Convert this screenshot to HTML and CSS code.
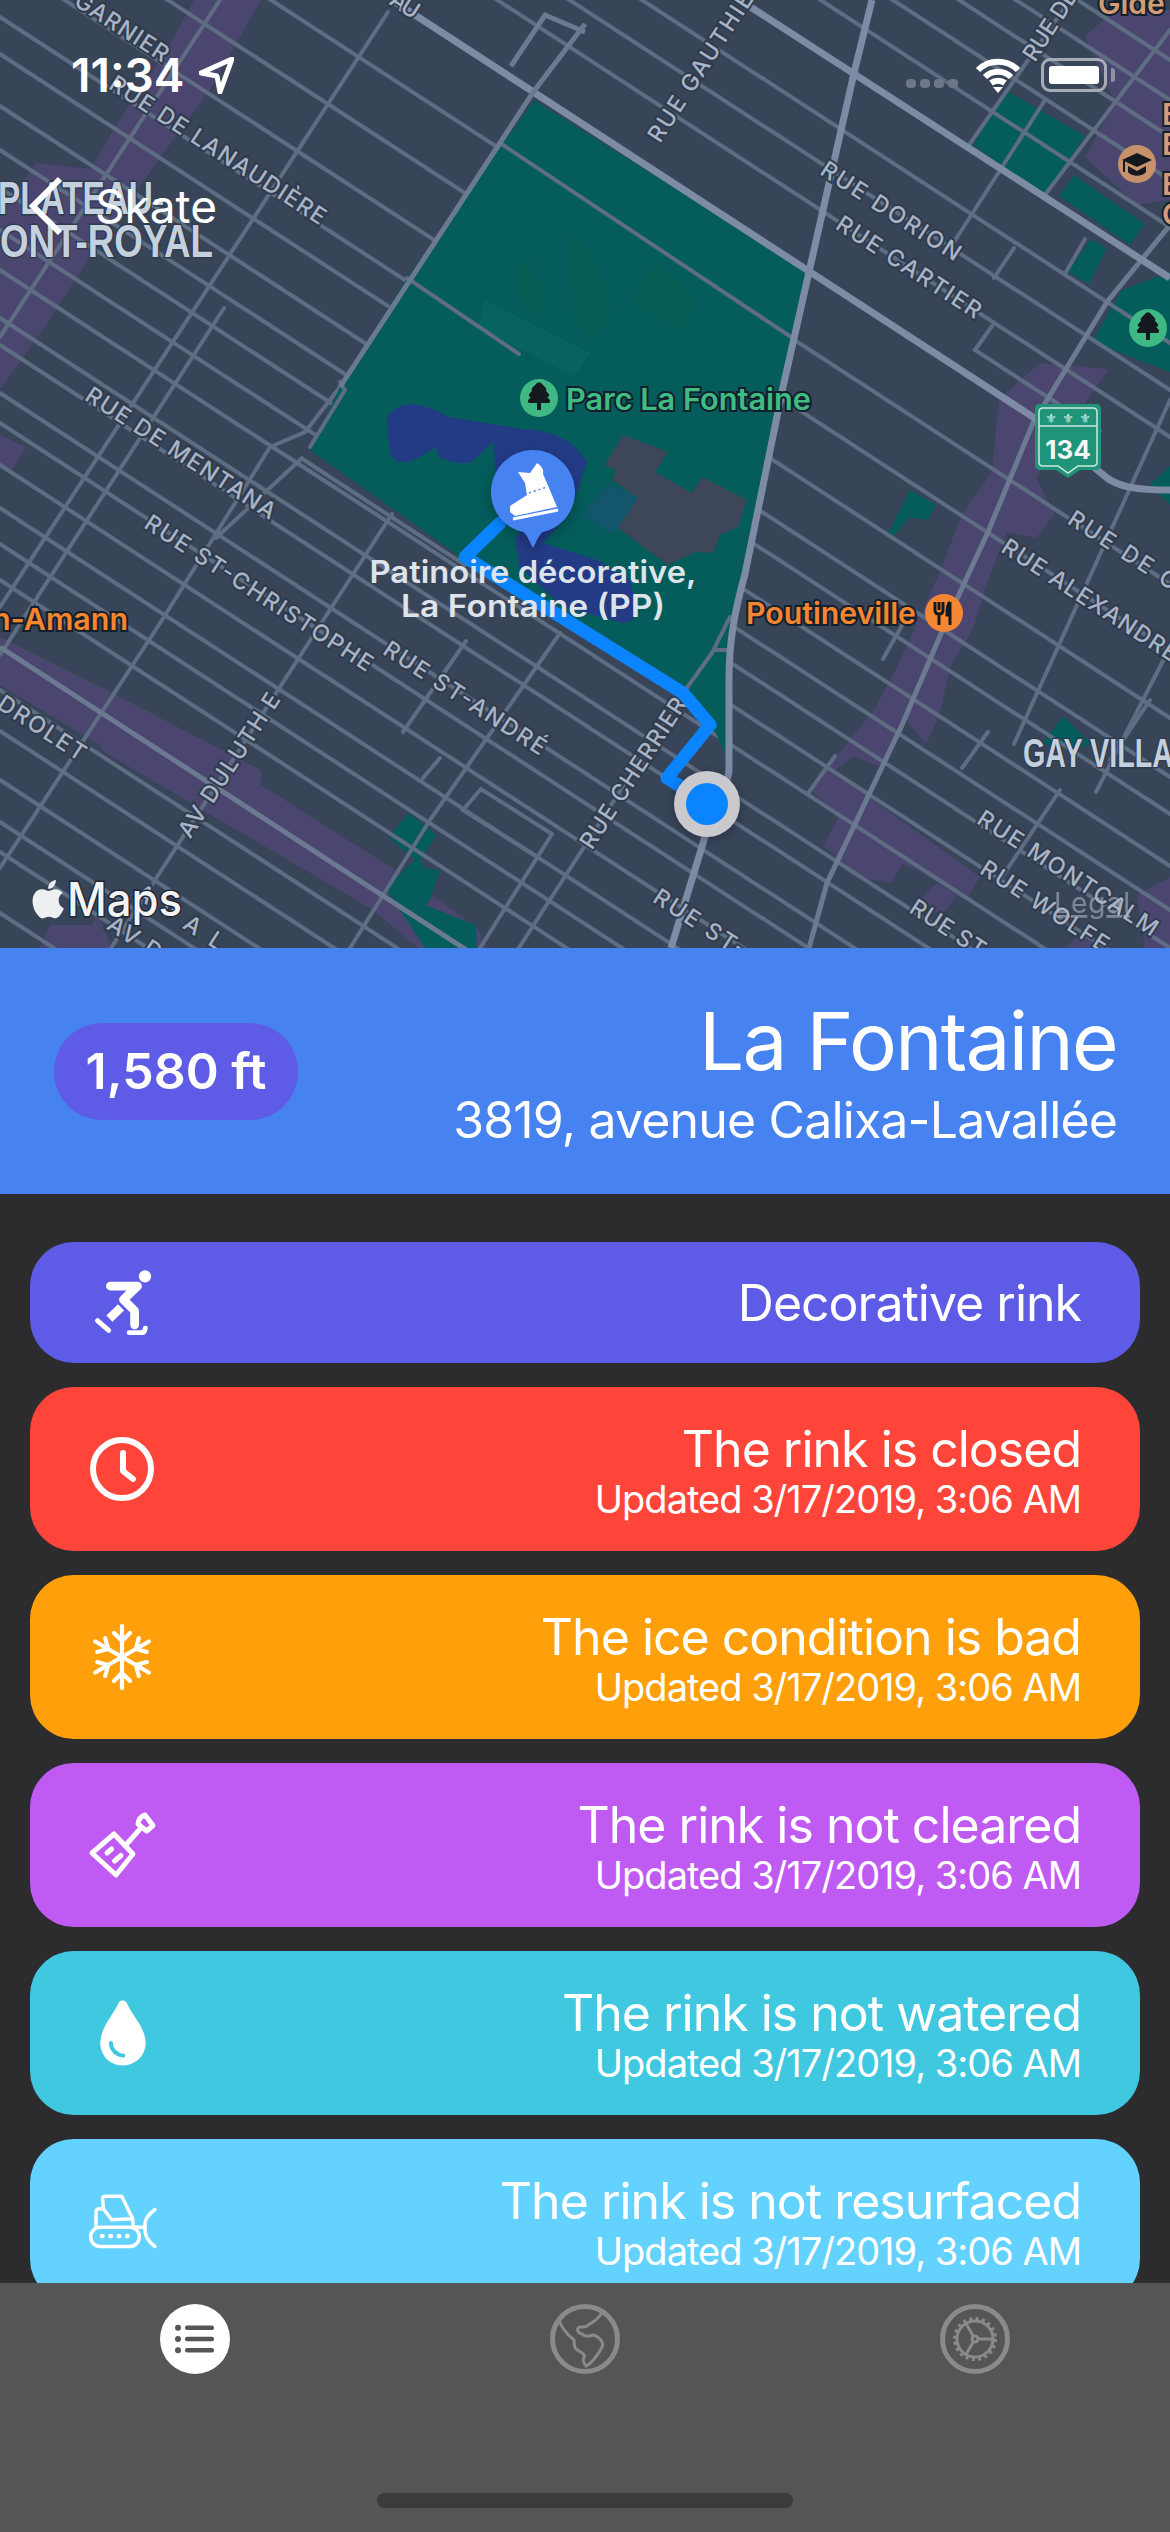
FILE: index.html
```html
<!DOCTYPE html>
<html>
  <head>
    <title>Skate</title>
    <link rel="stylesheet" href="styles.css">
  </head>
  <body>
    <div class="map">
      <svg class="map-canvas" viewBox="0 0 1170 948" width="1170" height="948">
        <!-- land use -->
        <g class="purple">
          <polygon points="194,0 261,0 209,91 112,224 45,326 0,390 0,212 37,163 90,169 123,115 168,48"/>
          <polygon points="0,435 26,447 11,471 0,468"/>
          <polygon points="0,637 112,693 261,770 261,785 395,870 477,927 487,948 418,948 373,910 104,752 100,745 0,685"/>
          <polygon points="50,925 90,925 100,948 40,948"/>
          <polygon points="82,948 97,913 112,948"/>
          <polygon points="1040,363 1109,369 1096,387 1036,478 1055,514 1036,538 1007,532 988,580 973,629 951,665 938,719 926,744 906,719 883,768 854,756 813,786 876,707 898,665 939,574 962,514 992,472 999,399"/>
          <polygon points="824,765 980,877 966,900 917,870 902,864 891,883 857,877 824,846 839,816 813,792"/>
          <polygon points="1085,36 1115,10 1170,10 1170,200 1137,205 1085,157 1115,103"/>
          <polygon points="1137,895 1170,877 1170,948 1145,948"/>
          <polygon points="913,907 936,883 958,895 943,913"/>
          <polygon points="1066,948 1081,931 1100,948"/>
        </g>
        <g class="park">
          <polygon points="973,145 1007,91 1085,136 1044,196"/>
          <polygon points="1059,196 1074,175 1145,224 1130,245"/>
          <polygon points="1068,272 1091,239 1107,248 1089,284"/>
          <polygon points="1092,342 1122,290 1170,272 1170,372"/>
          <polygon points="1150,484 1170,466 1170,505"/>
          <polygon points="887,535 910,490 936,505 928,520 910,517 895,535"/>
          <polygon points="1042,744 1063,716 1092,744 1075,750"/>
          <polygon points="388,837 409,813 437,835 420,860 425,868 440,870 430,900 425,905 476,925 477,948 425,948 385,888 415,860"/>
        </g>

        <!-- streets, NW-SE then NE-SW -->
        <path class="street" d="M0 -700L1170 60M0 -660L1170 100M0 -623L1170 137M0 -580L1170 180M0 -533L1170 227M0 -417L1170 343M0 -370L1170 390M0 -323L1170 437M0 -176L1170 584M0 -109L1170 651M0 -42L1170 718M0 17L1170 777M0 54L1170 814M0 106L1170 866M0 150L1170 910M0 188L1170 948M0 230L1170 990M0 270L1170 1030M0 318L1170 1078M0 345L1170 1105M0 393L1170 1153M0 423L1170 1183M0 465L1170 1225M0 508L1170 1268M0 544L1170 1304M0 580L1170 1340M0 690L1170 1450M0 731L1170 1491M0 780L1170 1540M0 822L1170 1582M0 852L1170 1612M0 913L1170 1673"/>
        <path class="street" d="M388 12L0 607M220 0L0 337M224 308L0 655M302 458L216 538M340 387L305 432L270 447L164 617L0 868M392 514L111 948M466 641L403 732M560 633L430 820L350 948M552 834L480 948M552 834L481 789L463 810L534 855M686 689L462 1036M440 758L423 778"/>
        <path class="street" d="M1070 0L969 145M1045 100L954 242M1014 248L994 278M1170 30L1044 196M1085 239L1066 272M992 326L975 350L1100 431M1170 400L1014 744M1170 647L1096 792M1060 790L1000 880M988 732L962 768M883 659L905 620M809 792L835 756M1150 700L1110 760"/>
        <path class="road-mid" d="M0 647L1170 1407M1170 225L1107 302L1033 423L988 532L943 629L902 725L827 883L809 948"/>

        <!-- Parc La Fontaine -->
        <polygon class="park" points="534,100 809,272 783,387 745,574 729,659 729,762 712,725 686,689 459,556 310,450 340,387 407,278"/>
        <polygon class="park-light" points="485,300 590,353 575,377 478,327"/>
        <polygon class="park-dark" points="515,270 530,257 545,300 530,320 518,300"/>
        <polygon class="park-dark" points="567,233 590,250 612,310 590,345 570,300"/>
        <polygon class="park-dark" points="630,300 655,260 698,300 680,330"/>
        <path class="water" d="M387 420C395 400 420 400 448 417L522 429C550 430 575 440 587 462L570 513L543 543L597 560L630 580C636 600 636 612 633 620L623 623L563 607L520 567L515 540L520 530L495 470L493 442L470 463L457 463L438 457L437 447L410 462L397 462L390 453Z"/>
        <polygon class="building" points="623,435 668,452 655,472 692,493 702,477 747,500 738,527 720,535 713,553 695,552 668,565 618,528 638,498 612,480 617,470 605,465"/>
        <polygon class="building-teal" points="583,515 608,483 638,498 612,535"/>
        <path class="street" d="M407 278L519 354M500 143L791 337M304 460L465 565M340 382L345 390L310 447"/>
        <path class="street" d="M686 689L712 653L730 617M715 650H729"/>

        <!-- big roads -->
        <path class="road" d="M392 0L1033 417L1107 478C1120 487 1135 490 1170 490M749 6L1170 278"/>
        <path class="road" d="M872 0L854 73L809 272L783 387L745 574C735 610 729 640 729 680V768Q729 785 712 804L704 840L671 948"/>
        <path class="road-mid" d="M585 32L545 15L511 66M585 24L534 91L340 387"/>

        <!-- street names -->
        <g class="street-names">
          <text transform="translate(122 27) rotate(33)" y="8" textLength="107">GARNIER</text>
          <text transform="translate(218 150) rotate(33)" y="8" textLength="253">RUE DE LANAUDIÈRE</text>
          <text transform="translate(181 453) rotate(33)" y="8" textLength="222">RUE DE MENTANA</text>
          <text transform="translate(259 593) rotate(33)" y="8" textLength="267">RUE ST-CHRISTOPHE</text>
          <text transform="translate(465 698) rotate(33)" y="8" textLength="189">RUE ST-ANDRÉ</text>
          <text transform="translate(42 728) rotate(33)" y="8" textLength="100">DROLET</text>
          <text transform="translate(229 765) rotate(-57)" y="8" textLength="167">AV DULUTH E</text>
          <text transform="translate(180 917) rotate(33)" y="8" textLength="100">AVAL</text>
          <text transform="translate(135 938) rotate(33)" y="8" textLength="60">AV D</text>
          <text transform="translate(405 5) rotate(33)" y="8" textLength="30">AU</text>
          <text transform="translate(705 60) rotate(-57)" y="8" textLength="190">RUE GAUTHIER</text>
          <text transform="translate(1050 25) rotate(-57)" y="8" textLength="80">RUE DE</text>
          <text transform="translate(891 211) rotate(33)" y="8" textLength="162">RUE DORION</text>
          <text transform="translate(909 267) rotate(33)" y="8" textLength="168">RUE CARTIER</text>
          <text transform="translate(1123 550) rotate(33)" y="8" textLength="125">RUE DE C</text>
          <text transform="translate(1090 600) rotate(33)" y="8" textLength="205">RUE ALEXANDRE</text>
          <text transform="translate(1068 873) rotate(33)" y="8" textLength="210">RUE MONTCALM</text>
          <text transform="translate(1045 906) rotate(33)" y="8" textLength="148">RUE WOLFE</text>
          <text transform="translate(948 928) rotate(33)" y="8" textLength="85">RUE ST</text>
          <text transform="translate(700 923) rotate(33)" y="8" textLength="105">RUE ST-</text>
          <text transform="translate(633 773) rotate(-57)" y="8" textLength="175">RUE CHERRIER</text>
        </g>
        <text class="district" x="-2" y="214" textLength="166" lengthAdjust="spacingAndGlyphs">PLATEAU-</text>
        <text class="district" x="0" y="257" textLength="213" lengthAdjust="spacingAndGlyphs">ONT-ROYAL</text>
        <text class="district district-small" x="1023" y="767" textLength="150" lengthAdjust="spacingAndGlyphs">GAY VILLA</text>

        <!-- places -->
        <circle class="poi-green" cx="539" cy="398" r="19"/>
        <path class="poi-glyph" d="M537 403H530C528 403 527 401 529 399L531 397C529 397 528 395 530 393L532 391C531 390 532 388 533 387L537 383C538 382 540 382 541 383L545 387C546 388 547 390 546 391L548 393C550 395 549 397 547 397L549 399C551 401 550 403 548 403H541V410H537Z"/>
        <text class="poi-text poi-text-green" x="566" y="410" textLength="245" lengthAdjust="spacingAndGlyphs">Parc La Fontaine</text>
        <circle class="poi-green" cx="1148" cy="328" r="19"/>
        <path class="poi-glyph" d="M1146 333H1139C1137 333 1136 331 1138 329L1140 327C1138 327 1137 325 1139 323L1141 321C1140 320 1141 318 1142 317L1146 313C1147 312 1149 312 1150 313L1154 317C1155 318 1156 320 1155 321L1157 323C1159 325 1158 327 1156 327L1158 329C1160 331 1159 333 1157 333H1150V340H1146Z"/>
        <circle class="poi-orange" cx="944" cy="613" r="19"/>
        <path class="poi-glyph-line" d="M935 602V610C935 613 937 614 939 614V625M943 602V610C943 613 941 614 939 614M939 602V610M950 602C947 604 947 610 947 615H950M950 602V625"/>
        <text class="poi-text poi-text-orange" x="746" y="624" textLength="170" lengthAdjust="spacingAndGlyphs">Poutineville</text>
        <text class="poi-text poi-text-orange" x="-8" y="630" textLength="136" lengthAdjust="spacingAndGlyphs">n-Amann</text>
        <circle class="poi-brown" cx="1137" cy="164" r="19"/>
        <path class="poi-glyph" d="M1137 153L1152 160L1137 167L1122 160ZM1128 166L1137 171L1146 166V172C1142 177 1132 177 1128 172ZM1123 161H1125V172H1123Z"/>
        <text class="poi-text poi-text-brown" x="1098" y="14">Gide</text>
        <text class="poi-text poi-text-brown" x="1162" y="125">E</text>
        <text class="poi-text poi-text-brown" x="1162" y="155">E</text>
        <text class="poi-text poi-text-brown" x="1162" y="195">E</text>
        <text class="poi-text poi-text-brown" x="1162" y="225">C</text>

        <!-- highway shield -->
        <path class="shield" d="M1040 404H1096Q1101 404 1101 409V464Q1101 470 1096 470H1080L1068 478L1056 470H1040Q1035 470 1035 464V409Q1035 404 1040 404Z"/>
        <path class="shield-line" d="M1043 408H1093Q1097 408 1097 412V462Q1097 466 1093 466H1078L1068 473L1058 466H1043Q1039 466 1039 462V412Q1039 408 1043 408ZM1039 426H1097"/>
        <text class="shield-fleur" x="1051" y="423">⚜</text>
        <text class="shield-fleur" x="1068" y="423">⚜</text>
        <text class="shield-fleur" x="1085" y="423">⚜</text>
        <text class="shield-num" x="1068" y="459">134</text>

        <!-- route, pin and position -->
        <path class="route" d="M500 523L465 557L683 693L710 725L667 778L690 792"/>
        <g class="pin">
          <path class="pin-body" d="M533 450C556 450 575 469 575 492C575 512 561 528 543 532C539 534 536 543 533 548C530 543 527 534 523 532C505 528 491 512 491 492C491 469 510 450 533 450Z"/>
          <path class="pin-skate" d="M518 472L530 473L537 463C542 466 544 470 543 474L552 495L557 507L515 516L510 512L510 506L527 495L525 483Z"/>
          <path class="pin-blade" d="M513 519L558 510"/>
          <path class="pin-lace" d="M529 493L547 487"/>
        </g>
        <text class="pin-label" x="533" y="583" textLength="327" lengthAdjust="spacingAndGlyphs">Patinoire décorative,</text>
        <text class="pin-label" x="533" y="617" textLength="264" lengthAdjust="spacingAndGlyphs">La Fontaine (PP)</text>
        <circle class="me-ring" cx="707" cy="804" r="33"/>
        <circle class="me-dot" cx="707" cy="804" r="21"/>

        <!-- attribution -->
        <path class="apple" transform="translate(29 880) scale(1.6)" d="M12.152 6.896c-.948 0-2.415-1.078-3.96-1.04-2.04.027-3.91 1.183-4.961 3.014-2.117 3.675-.546 9.103 1.519 12.09 1.013 1.454 2.208 3.09 3.792 3.039 1.52-.065 2.09-.987 3.935-.987 1.831 0 2.35.987 3.96.948 1.637-.026 2.676-1.48 3.676-2.948 1.156-1.688 1.636-3.325 1.662-3.415-.039-.013-3.182-1.221-3.22-4.857-.026-3.04 2.48-4.494 2.597-4.559-1.429-2.09-3.623-2.324-4.39-2.376-2-.156-3.675 1.09-4.61 1.09zM15.53 3.83c.843-1.012 1.4-2.427 1.245-3.83-1.207.052-2.662.805-3.532 1.818-.78.896-1.454 2.338-1.273 3.714 1.338.104 2.715-.688 3.559-1.701"/>
        <text class="maps-word" x="67" y="916" textLength="115" lengthAdjust="spacingAndGlyphs">Maps</text>
        <text class="legal" x="1054" y="913" textLength="76">Legal</text>
      </svg>

      <div class="statusbar">
        <div class="status-left">
          <span class="time">11:34</span>
          <svg class="loc" width="35" height="37" viewBox="0 0 35 37"><path d="M33 2L2 16L18 19L21 35Z"/></svg>
        </div>
        <div class="status-right">
          <div class="signal"><i></i><i></i><i></i><i></i></div>
          <svg class="wifi" width="46" height="35" viewBox="0 0 46 35">
            <path d="M3 12C14 1 32 1 43 12M10 19C17 12 29 12 36 19M16 25C20 22 26 22 30 25"/>
            <polygon points="23,35 18,29 28,29"/>
          </svg>
          <div class="battery"><div class="battery-fill"></div></div>
          <div class="battery-nub"></div>
        </div>
      </div>

      <div class="navbar">
        <svg width="34" height="60" viewBox="0 0 34 60"><path d="M31 3L4 30L31 57"/></svg>
        <span>Skate</span>
      </div>
    </div>

    <div class="header">
      <div class="distance">1,580 ft</div>
      <div class="rink-name">
        <h1>La Fontaine</h1>
        <p>3819, avenue Calixa-Lavallée</p>
      </div>
    </div>

    <div class="list">
      <div class="row row-single indigo">
        <svg class="row-icon" viewBox="0 0 66 68">
          <circle class="fill" cx="56.7" cy="6.5" r="6.3"/>
          <path class="stroke thick" d="M21 16.5H49L34.5 30.5L46 42V56.5"/>
          <path class="stroke thick butt" d="M32 38.5L20 50"/>
          <path class="stroke" d="M7.7 52.2L19.3 62.2M40.3 64.5H54C55.5 64.5 56.5 62.5 57 60"/>
        </svg>
        <div class="row-text"><div class="row-title">Decorative rink</div></div>
      </div>
      <div class="row red">
        <svg class="row-icon" viewBox="0 0 66 66">
          <circle class="stroke heavy" cx="33" cy="33" r="29"/>
          <path class="stroke heavy" d="M34 17V35L44 43"/>
        </svg>
        <div class="row-text">
          <div class="row-title">The rink is closed</div>
          <div class="row-sub">Updated 3/17/2019, 3:06 AM</div>
        </div>
      </div>
      <div class="row orange">
        <svg class="row-icon" viewBox="0 0 66 66">
          <g class="stroke flake">
            <path id="arm" d="M33 33V2M25 9L33 17L41 9"/>
            <use href="#arm" transform="rotate(60 33 33)"/>
            <use href="#arm" transform="rotate(120 33 33)"/>
            <use href="#arm" transform="rotate(180 33 33)"/>
            <use href="#arm" transform="rotate(240 33 33)"/>
            <use href="#arm" transform="rotate(300 33 33)"/>
          </g>
        </svg>
        <div class="row-text">
          <div class="row-title">The ice condition is bad</div>
          <div class="row-sub">Updated 3/17/2019, 3:06 AM</div>
        </div>
      </div>
      <div class="row purple-row">
        <svg class="row-icon" viewBox="0 0 66 66">
          <path class="stroke" d="M25 22L3 41L27 63L44 42ZM37.7 32L51 17M56 3L64 13.5L57.7 19L49 12C49 8 52 4 56 3Z"/>
          <path class="stroke" d="M18 41L22.7 37M25.5 49L32 43.5"/>
        </svg>
        <div class="row-text">
          <div class="row-title">The rink is not cleared</div>
          <div class="row-sub">Updated 3/17/2019, 3:06 AM</div>
        </div>
      </div>
      <div class="row teal">
        <svg class="row-icon" viewBox="0 0 66 67">
          <path class="fill" d="M33.7 .5C31 .5 29.5 2.5 28.5 5C24 15 11 28 11 44C11 56.5 21 66.5 33.7 66.5S57 56.5 57 44C57 28 43 15 39 5C38 2.5 36.5 .5 33.7 .5Z"/>
          <path class="drop-shine" d="M21.7 43.5C21.7 50 27 56 34.3 56.5"/>
        </svg>
        <div class="row-text">
          <div class="row-title">The rink is not watered</div>
          <div class="row-sub">Updated 3/17/2019, 3:06 AM</div>
        </div>
      </div>
      <div class="row sky">
        <svg class="row-icon" viewBox="0 0 66 66">
          <g class="stroke thin">
            <rect x="1.7" y="39.2" width="48.6" height="19.3" rx="9.6"/>
            <path d="M7 39.2V24C7 22 8.5 20.8 10.3 20.8H14.3L22.7 31.8L43.7 30.8L44.3 39.2M14.3 20.8L13.7 11C13.7 9.2 14.5 8.2 16 8.2H32.7L43.7 30.8M46 39.2H56.3M66 21.5C60 26 56 30 56 36V42C56 48 60 54 66 58.5"/>
          </g>
          <circle class="fill" cx="13.3" cy="48.2" r="2.4"/>
          <circle class="fill" cx="21.7" cy="48.2" r="2.4"/>
          <circle class="fill" cx="30" cy="48.2" r="2.4"/>
          <circle class="fill" cx="38.3" cy="48.2" r="2.4"/>
        </svg>
        <div class="row-text">
          <div class="row-title">The rink is not resurfaced</div>
          <div class="row-sub">Updated 3/17/2019, 3:06 AM</div>
        </div>
      </div>
    </div>

    <div class="tabbar">
      <div class="tabs">
        <svg class="tab" viewBox="0 0 70 70">
          <circle class="tab-on" cx="35" cy="35" r="35"/>
          <g class="tab-glyph">
            <circle cx="18" cy="23.7" r="3"/><rect x="25" y="21.5" width="29" height="4.5" rx="2"/>
            <circle cx="18" cy="35" r="3"/><rect x="25" y="32.8" width="29" height="4.5" rx="2"/>
            <circle cx="18" cy="46.3" r="3"/><rect x="25" y="44" width="29" height="4.5" rx="2"/>
          </g>
        </svg>
        <svg class="tab tab-off" viewBox="0 0 70 70">
          <circle class="ring" cx="35" cy="35" r="32.5"/>
          <path class="detail" d="M9.3 16C11 24 18 31 24 36C25 39 23 42 26 45C30 48 34 49 34.5 52C33 55 32 58 36 62C41 60 49 50 52.5 42C53.5 37 48 32 43 31C38 33 35 33 32 30C27 29 26 24 30 23C33 23 36 24 38 21C44 18 48 15 51.7 9.3"/>
        </svg>
        <svg class="tab tab-off" viewBox="0 0 70 70">
          <circle class="ring" cx="35" cy="35" r="32.5"/>
          <circle class="detail" cx="35" cy="35" r="18"/>
          <circle class="teeth" cx="35" cy="35" r="20"/>
          <circle class="detail" cx="35" cy="35" r="3"/>
          <path class="detail" d="M38 35H53M33.5 32.4L26 19.5M33.5 37.6L26 50.5"/>
        </svg>
      </div>
      <div class="home-bar"></div>
    </div>
  </body>
</html>
```

FILE: styles.css
```css
* {
  box-sizing: border-box;
}

body {
  margin: 0;
  width: 1170px;
  height: 2532px;
  display: flex;
  flex-direction: column;
  overflow: hidden;
  font-family: Inter, "Noto Sans", sans-serif;
  color: #fff;
  background-color: #2c2c2e;
}

/* map */
.map {
  position: relative;
  flex: 0 0 948px;
  overflow: hidden;
  background-color: #384559;
}

.map-canvas {
  display: block;
}

.purple polygon {
  fill: #4b4670;
}

.park polygon,
polygon.park {
  fill: #045c5b;
}

.park-light {
  fill: #076360;
}

.park-dark {
  fill: #075c55;
}

.water {
  fill: #233a85;
}

.building {
  fill: #3d4759;
}

.building-teal {
  fill: #13566b;
}

.street {
  fill: none;
  stroke: #5f6d83;
  stroke-width: 4;
  stroke-linecap: round;
}

.road {
  fill: none;
  stroke: #7d8ba5;
  stroke-width: 7;
}

.road-mid {
  fill: none;
  stroke: #6c7a91;
  stroke-width: 5;
}

.street-names text {
  font-size: 23px;
  font-weight: 500;
  fill: #a8b3c6;
  stroke: #2f3b4d;
  stroke-width: 4px;
  paint-order: stroke;
  text-anchor: middle;
}

.district {
  font-family: "Liberation Sans", sans-serif;
  font-size: 46px;
  font-weight: 700;
  fill: #c5d0df;
  stroke: #2f3b4d;
  stroke-width: 3px;
  paint-order: stroke;
}

.district-small {
  font-size: 41px;
}

.poi-green {
  fill: #3fb883;
}

.poi-orange {
  fill: #f58634;
}

.poi-brown {
  fill: #c6916b;
}

.poi-glyph {
  fill: #14181f;
}

.poi-glyph-line {
  fill: none;
  stroke: #14181f;
  stroke-width: 3;
}

.poi-text {
  font-size: 30px;
  font-weight: 600;
  stroke: #14202c;
  stroke-width: 4px;
  paint-order: stroke;
}

.poi-text-green {
  fill: #3fbb84;
}

.poi-text-orange {
  fill: #f5852f;
}

.poi-text-brown {
  fill: #d39c78;
}

.shield {
  fill: #1f9478;
}

.shield-line {
  fill: none;
  stroke: #cfe8df;
  stroke-width: 1.5;
}

.shield-fleur {
  font-family: "DejaVu Sans", sans-serif;
  font-size: 13px;
  fill: #d6efe6;
  text-anchor: middle;
}

.shield-num {
  font-size: 26px;
  font-weight: 700;
  fill: #f2f8f5;
  text-anchor: middle;
}

.route {
  fill: none;
  stroke: #0a84ff;
  stroke-width: 13;
  stroke-linejoin: round;
  stroke-linecap: round;
}

.pin {
  filter: drop-shadow(0 4px 6px rgba(0, 0, 0, 0.25));
}

.pin-body {
  fill: #4682f0;
}

.pin-skate {
  fill: #fff;
}

.pin-blade {
  stroke: #fff;
  stroke-width: 3;
}

.pin-lace {
  stroke: #4682f0;
  stroke-width: 1.5;
  stroke-dasharray: 2 3;
}

.pin-label {
  font-size: 31px;
  font-weight: 600;
  fill: #dfe3ea;
  text-anchor: middle;
}

.me-ring {
  fill: #c9c9ce;
  filter: drop-shadow(0 2px 6px rgba(0, 0, 0, 0.3));
}

.me-dot {
  fill: #0a84ff;
}

.apple {
  fill: #eeeff1;
}

.maps-word {
  font-size: 46px;
  font-weight: 500;
  fill: #f2f3f5;
  stroke: #20262f;
  stroke-width: 3px;
  paint-order: stroke;
}

.legal {
  font-size: 28px;
  fill: #b0b6c1;
  opacity: 0.6;
  text-decoration: underline;
}

/* status bar and back button sit on the map */
.statusbar {
  position: absolute;
  top: 56px;
  left: 71px;
  right: 55px;
  display: flex;
  justify-content: space-between;
  align-items: center;
}

.status-left,
.status-right {
  display: flex;
  align-items: center;
}

.time {
  font-size: 46px;
  font-weight: 600;
  line-height: 38px;
}

.loc {
  margin-left: 15px;
}

.loc path {
  fill: none;
  stroke: #fff;
  stroke-width: 5;
  stroke-linejoin: round;
}

.signal {
  display: flex;
  gap: 4px;
  margin-top: 16px;
  margin-right: 17px;
}

.signal i {
  width: 10px;
  height: 9px;
  border-radius: 4px;
  background-color: #6d7787;
}

.wifi {
  margin-right: 20px;
}

.wifi path {
  fill: none;
  stroke: #fff;
  stroke-width: 6;
}

.wifi polygon {
  fill: #fff;
}

.battery {
  width: 66px;
  height: 34px;
  padding: 5px;
  border: 3px solid #a6acb6;
  border-radius: 9px;
}

.battery-fill {
  height: 100%;
  border-radius: 3px;
  background-color: #fff;
}

.battery-nub {
  width: 4px;
  height: 14px;
  margin-left: 4px;
  border-radius: 0 3px 3px 0;
  background-color: #8b93a0;
}

.navbar {
  position: absolute;
  top: 176px;
  left: 29px;
  display: flex;
  align-items: center;
  gap: 32px;
  font-size: 46px;
}

.navbar svg path {
  fill: none;
  stroke: #fff;
  stroke-width: 6;
}

/* rink header */
.header {
  flex: 0 0 246px;
  display: flex;
  justify-content: space-between;
  align-items: center;
  padding: 0 53px 0 54px;
  background-color: #4682f0;
}

.distance {
  width: 244px;
  height: 97px;
  margin-top: 1px;
  border-radius: 48px;
  font-size: 50px;
  font-weight: 600;
  line-height: 97px;
  text-align: center;
  background-color: #5e5ce6;
}

.rink-name {
  margin-top: 3px;
  text-align: right;
}

.rink-name h1 {
  margin: 0;
  font-size: 80px;
  font-weight: 400;
  line-height: 92px;
  letter-spacing: -1.7px;
}

.rink-name p {
  margin: 3px 0 0;
  font-size: 50px;
  line-height: 60px;
  letter-spacing: -0.85px;
}

/* status list */
.list {
  flex: 1;
  min-height: 0;
  overflow: hidden;
  display: flex;
  flex-direction: column;
  gap: 24px;
  padding: 48px 30px 0;
}

.row {
  flex: 0 0 164px;
  display: flex;
  align-items: center;
  justify-content: space-between;
  padding: 0 59px 0 59px;
  border-radius: 44px;
}

.row-single {
  flex-basis: 121px;
}

.indigo {
  background-color: #5e5ce6;
}

.red {
  background-color: #ff453a;
}

.orange {
  background-color: #ff9f0a;
}

.purple-row {
  background-color: #bf5af2;
}

.teal {
  background-color: #40c8e0;
}

.sky {
  background-color: #64d2ff;
}

.row-icon {
  width: 66px;
  height: 66px;
  flex: none;
  overflow: visible;
}

.fill {
  fill: #fff;
}

.stroke {
  fill: none;
  stroke: #fff;
  stroke-width: 5;
  stroke-linecap: round;
  stroke-linejoin: round;
}

.thick {
  stroke-width: 9;
}

.butt {
  stroke-linecap: butt;
}

.heavy {
  stroke-width: 6;
}

.flake {
  stroke-width: 4.2;
}

.thin {
  stroke-width: 3.5;
}

.drop-shine {
  fill: none;
  stroke: #40c8e0;
  stroke-width: 4;
  stroke-linecap: round;
}

.row-text {
  text-align: right;
}

.row-title {
  font-size: 50px;
  line-height: 60px;
  letter-spacing: -1px;
}

.row-sub {
  font-size: 38px;
  line-height: 40px;
  letter-spacing: -1px;
}

/* tab bar */
.tabbar {
  flex: 0 0 249px;
  display: flex;
  flex-direction: column;
  justify-content: space-between;
  align-items: center;
  padding: 21px 0 24px;
  background-color: #555;
}

.tabs {
  width: 100%;
  display: grid;
  grid-template-columns: repeat(3, 1fr);
  justify-items: center;
}

.tab {
  width: 70px;
  height: 70px;
}

.tab-on {
  fill: #fff;
}

.tab-glyph {
  fill: #555;
}

.ring {
  fill: none;
  stroke: #8a8a8a;
  stroke-width: 5;
}

.detail {
  fill: none;
  stroke: #8a8a8a;
  stroke-width: 3;
  stroke-linecap: round;
}

.teeth {
  fill: none;
  stroke: #8a8a8a;
  stroke-width: 4;
  stroke-dasharray: 3 3.28;
}

.home-bar {
  width: 416px;
  height: 15px;
  border-radius: 8px;
  background-color: #3b3b3b;
}
```
